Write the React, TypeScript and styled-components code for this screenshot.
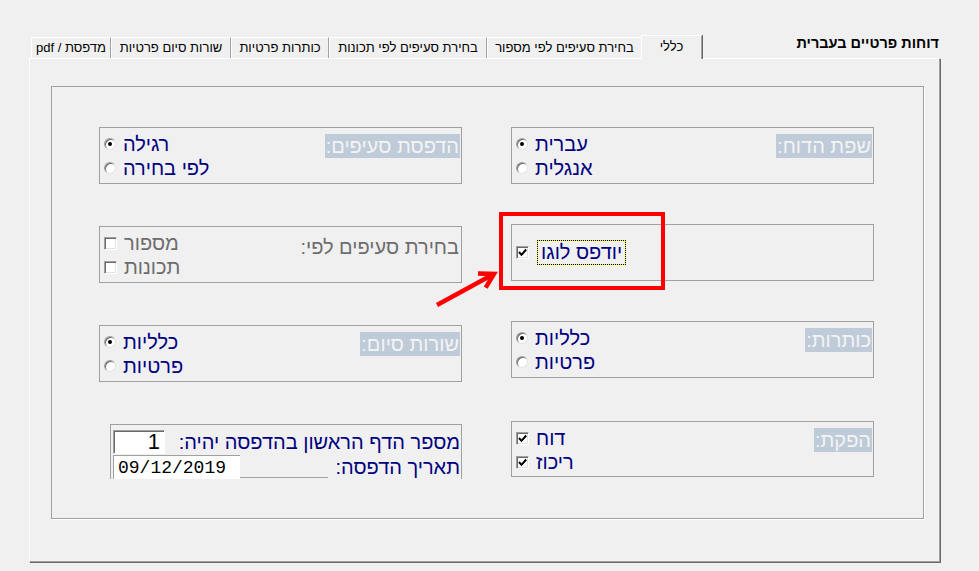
import styled, { createGlobalStyle } from "styled-components";

const NAVY = "#000080";
const SHADOW = "#a0a0a0";
const DARK = "#696969";

const GlobalStyle = createGlobalStyle`
  html, body {
    margin: 0;
    padding: 0;
    background: #f0f0f0;
  }
  body {
    font-family: "Liberation Sans", Arial, "DejaVu Sans", sans-serif;
  }
`;

type TabDef = { label: string; width: number; active?: boolean };

const TABS: TabDef[] = [
  { label: "מדפסת / pdf", width: 80 },
  { label: "שורות סיום פרטיות", width: 120 },
  { label: "כותרות פרטיות", width: 98 },
  { label: "בחירת סעיפים לפי תכונות", width: 158 },
  { label: "בחירת סעיפים לפי מספור", width: 155 },
  { label: "כללי", width: 61, active: true },
];

const Radio = ({ checked }: { checked?: boolean }) => (
  <RadioCircle $checked={checked} />
);

const CheckBox = ({ checked }: { checked?: boolean }) => (
  <CheckSquare>
    {checked && (
      <svg width="9" height="9" viewBox="0 0 9 9">
        <path d="M1 4 L3.5 6.8 L8.2 1.5" fill="none" stroke="#000" strokeWidth="2" />
      </svg>
    )}
  </CheckSquare>
);

const RadioGroup = (props: { label: string; options: string[] }) => (
  <GroupBox>
    <GroupLabel>{props.label}</GroupLabel>
    <Options>
      {props.options.map((option, index) => (
        <Option key={option}>
          <Radio checked={index === 0} />
          <OptionText dir="rtl">{option}</OptionText>
        </Option>
      ))}
    </Options>
  </GroupBox>
);

const App = () => {
  return (
    <Window>
      <GlobalStyle />
      <Header>
        <TabStrip>
          {TABS.map((tab) => (
            <Tab key={tab.label} $width={tab.width} $active={tab.active}>
              {tab.label}
            </Tab>
          ))}
        </TabStrip>
        <Title>דוחות פרטיים בעברית</Title>
      </Header>
      <Panel>
        <Frame>
          <Column $gap={42}>
            <RadioGroup label="הדפסת סעיפים:" options={["רגילה", "לפי בחירה"]} />
            <GroupBox>
              <GroupLabel $disabled $offset={2}>
                בחירת סעיפים לפי:
              </GroupLabel>
              <Options>
                <Option $disabled>
                  <CheckBox />
                  <OptionText dir="rtl">מספור</OptionText>
                </Option>
                <Option $disabled>
                  <CheckBox />
                  <OptionText dir="rtl">תכונות</OptionText>
                </Option>
              </Options>
            </GroupBox>
            <RadioGroup label="שורות סיום:" options={["כלליות", "פרטיות"]} />
            <PageBox>
              <FieldRow>
                <FieldLabel>מספר הדף הראשון בהדפסה יהיה:</FieldLabel>
                <NumberBox>1</NumberBox>
              </FieldRow>
              <FieldRow>
                <FieldLabel>תאריך הדפסה:</FieldLabel>
                <DateField>
                  <DateText>09/12/2019</DateText>
                  <DateTail />
                </DateField>
              </FieldRow>
            </PageBox>
          </Column>
          <Column $gap={40}>
            <RadioGroup label="שפת הדוח:" options={["עברית", "אנגלית"]} />
            <GroupBox $center>
              <Options $flat>
                <Option $gap={8}>
                  <CheckBox checked />
                  <FocusText dir="rtl">יודפס לוגו</FocusText>
                </Option>
              </Options>
            </GroupBox>
            <RadioGroup label="כותרות:" options={["כלליות", "פרטיות"]} />
            <GroupBox $push={3} $height={56}>
              <GroupLabel>הפקת:</GroupLabel>
              <Options>
                <Option>
                  <CheckBox checked />
                  <OptionText dir="rtl">דוח</OptionText>
                </Option>
                <Option>
                  <CheckBox checked />
                  <OptionText dir="rtl">ריכוז</OptionText>
                </Option>
              </Options>
            </GroupBox>
          </Column>
        </Frame>
      </Panel>
      <Highlight />
      <Arrow width="80" height="50" viewBox="0 0 80 50">
        <path d="M7 40 L62 10" stroke="#ff0000" strokeWidth="4.5" fill="none" />
        <path d="M48 8.6 L64 9 L55.7 22.6" stroke="#ff0000" strokeWidth="4.5" fill="none" />
      </Arrow>
    </Window>
  );
};

export default App;

const Window = styled.div`
  position: relative;
  box-sizing: border-box;
  width: 979px;
  height: 571px;
  padding: 35px 0 0 29px;
  background: #f0f0f0;
`;

const Header = styled.div`
  display: flex;
  align-items: flex-end;
  width: 911px;
  height: 23px;
`;

const TabStrip = styled.div`
  display: flex;
  align-items: flex-end;
  height: 100%;
  padding-left: 2px;
`;

const Tab = styled.div<{ $width: number; $active?: boolean }>`
  position: relative;
  z-index: ${({ $active }) => ($active ? 1 : 0)};
  box-sizing: border-box;
  width: ${({ $width }) => $width}px;
  height: ${({ $active }) => ($active ? 24 : 21)}px;
  margin-left: ${({ $active }) => ($active ? -1 : 0)}px;
  margin-bottom: ${({ $active }) => ($active ? -1 : 0)}px;
  border-top: 1px solid #fff;
  border-left: 1px solid #fff;
  border-right: 1px solid ${SHADOW};
  box-shadow: 1px 0 0 ${DARK};
  background: #f0f0f0;
  direction: rtl;
  text-align: center;
  font-size: 13px;
  line-height: ${({ $active }) => ($active ? 21 : 19)}px;
  color: #000;
  white-space: nowrap;
`;

const Title = styled.div`
  align-self: flex-start;
  margin-left: auto;
  margin-right: 1px;
  direction: rtl;
  font-size: 14.5px;
  font-weight: bold;
  line-height: 16px;
  color: #000;
`;

const Panel = styled.div`
  box-sizing: border-box;
  width: 911px;
  height: 504px;
  border-top: 1px solid #fff;
  border-left: 1px solid #fff;
  border-right: 1px solid ${SHADOW};
  border-bottom: 1px solid ${SHADOW};
  box-shadow: 1px 1px 0 ${DARK};
  padding: 27px 0 0 21px;
`;

const Frame = styled.div`
  box-sizing: border-box;
  width: 873px;
  height: 433px;
  border: 1px solid ${SHADOW};
  box-shadow: 1px 1px 0 #fff;
  padding: 40px 0 0 47px;
  display: grid;
  grid-template-columns: 363px 363px;
  column-gap: 49px;
  align-items: start;
`;

const Column = styled.div<{ $gap: number }>`
  display: flex;
  flex-direction: column;
  gap: ${({ $gap }) => $gap}px;
`;

const GroupBox = styled.div<{ $height?: number; $center?: boolean; $push?: number }>`
  box-sizing: border-box;
  height: ${({ $height }) => $height ?? 57}px;
  margin-top: ${({ $push }) => $push ?? 0}px;
  border: 1px solid ${SHADOW};
  display: flex;
  direction: rtl;
  align-items: ${({ $center }) => ($center ? "center" : "flex-start")};
  padding: ${({ $center }) => ($center ? "0 1px 0 4px" : "6px 1px 0 4px")};
`;

const GroupLabel = styled.div<{ $disabled?: boolean; $offset?: number }>`
  margin-top: ${({ $offset }) => $offset ?? 0}px;
  padding: 0 1px;
  font-size: 20px;
  line-height: 24px;
  white-space: nowrap;
  background: ${({ $disabled }) => ($disabled ? "transparent" : "#bfcbd9")};
  color: ${({ $disabled }) => ($disabled ? "#6d6d6d" : "#f4f4f4")};
`;

const Options = styled.div<{ $flat?: boolean }>`
  margin-right: auto;
  margin-top: ${({ $flat }) => ($flat ? 0 : -2)}px;
  display: flex;
  flex-direction: column;
`;

const Option = styled.div<{ $disabled?: boolean; $gap?: number }>`
  display: flex;
  direction: ltr;
  align-items: center;
  gap: ${({ $gap }) => $gap ?? 7}px;
  height: 24px;
  font-size: 20px;
  color: ${({ $disabled }) => ($disabled ? "#6d6d6d" : NAVY)};
`;

const OptionText = styled.span`
  line-height: 24px;
  white-space: nowrap;
`;

const FocusText = styled.span`
  box-sizing: border-box;
  height: 25px;
  padding: 0 3px;
  line-height: 23px;
  white-space: nowrap;
  border: 1px dotted #000;
  background: linear-gradient(#f0f0f0, #f0f0f0) padding-box, #f5f500 border-box;
`;

const RadioCircle = styled.span<{ $checked?: boolean }>`
  box-sizing: border-box;
  flex-shrink: 0;
  width: 12px;
  height: 12px;
  border-radius: 50%;
  background: #fff;
  border: 1px solid;
  border-color: ${SHADOW} #e3e3e3 #e3e3e3 ${SHADOW};
  box-shadow: inset 1px 1px 0 ${DARK};
  display: flex;
  align-items: center;
  justify-content: center;

  &::after {
    content: "";
    display: ${({ $checked }) => ($checked ? "block" : "none")};
    width: 4px;
    height: 4px;
    border-radius: 50%;
    background: #000;
  }
`;

const CheckSquare = styled.span`
  box-sizing: border-box;
  flex-shrink: 0;
  width: 13px;
  height: 13px;
  background: #fff;
  border: 1px solid;
  border-color: ${SHADOW} #fff #fff ${SHADOW};
  box-shadow: inset 1px 1px 0 ${DARK}, inset -1px -1px 0 #e3e3e3;
  display: flex;
  align-items: center;
  justify-content: center;
`;

const PageBox = styled.div`
  box-sizing: border-box;
  height: 55px;
  margin-left: 11px;
  border: 1px solid ${SHADOW};
  border-bottom: none;
  padding: 5px 1px 0 2px;
  display: flex;
  flex-direction: column;
`;

const FieldRow = styled.div`
  display: flex;
  direction: rtl;
  align-items: center;
  justify-content: space-between;
  height: 25px;
`;

const FieldLabel = styled.span`
  font-size: 20px;
  line-height: 24px;
  color: ${NAVY};
  white-space: nowrap;
`;

const NumberBox = styled.div`
  box-sizing: border-box;
  width: 52px;
  height: 24px;
  background: #fff;
  border: 1px solid;
  border-color: ${SHADOW} #fff #fff ${SHADOW};
  box-shadow: inset 1px 1px 0 ${DARK};
  padding-right: 4px;
  text-align: right;
  font-size: 22px;
  line-height: 22px;
  color: #000;
`;

const DateField = styled.div`
  display: flex;
  direction: ltr;
  align-self: flex-end;
`;

const DateText = styled.div`
  box-sizing: border-box;
  width: 127px;
  height: 24px;
  background: #fff;
  border-left: 1px solid ${SHADOW};
  border-top: 1px solid ${SHADOW};
  padding-left: 4px;
  font-family: "Liberation Mono", "Courier New", monospace;
  font-size: 18px;
  line-height: 24px;
  color: #000;
`;

const DateTail = styled.div`
  width: 88px;
  height: 22px;
  border-bottom: 1px solid ${SHADOW};
`;

const Highlight = styled.div`
  position: absolute;
  left: 499px;
  top: 212px;
  box-sizing: border-box;
  width: 166px;
  height: 78px;
  border: 4px solid #ff0000;
`;

const Arrow = styled.svg`
  position: absolute;
  left: 430px;
  top: 265px;
  overflow: visible;
`;
